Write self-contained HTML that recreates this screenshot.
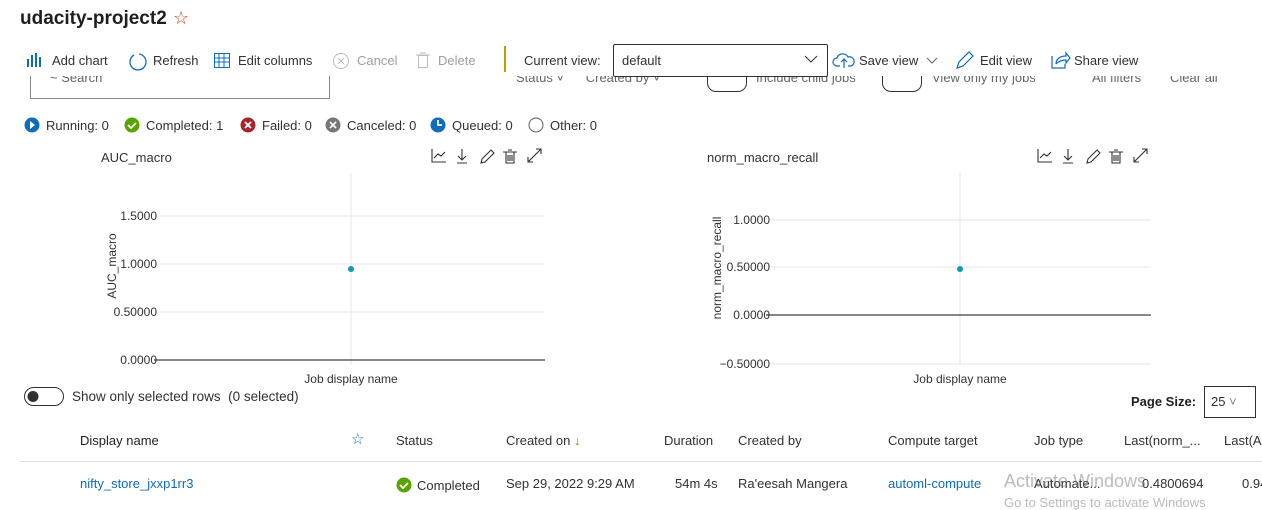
<!DOCTYPE html>
<html><head><meta charset="utf-8"><style>
body{margin:0;width:1262px;height:505px;overflow:hidden;background:#fff;font-family:"Liberation Sans",sans-serif;font-size:13px;color:#323130;position:relative}
.a{position:absolute;white-space:nowrap}
.g{color:#a19f9d}
.b{color:#0f6cbd}
svg{position:absolute;left:0;top:0}
</style></head><body>
<div class="a" style="left:20px;top:8px;font-size:19px;font-weight:bold;color:#201f1e">udacity-project2</div>
<div class="a" style="left:173px;top:8px;font-size:18px;color:#c43e1c">☆</div>

<div class="a" style="left:30px;top:76px;width:298px;height:22px;border:1px solid #8a8886;border-top:none"></div>
<div class="a" style="left:50px;top:70px;font-size:13px;color:#666">~ Search</div>
<div class="a" style="left:516px;top:70px;color:#666">Status ˅ &nbsp;&nbsp;&nbsp;&nbsp; Created by ˅</div>
<div class="a" style="left:707px;top:66px;width:38px;height:24px;border:1px solid #333;border-radius:9px"></div>
<div class="a" style="left:756px;top:70px;color:#666">Include child jobs</div>
<div class="a" style="left:882px;top:66px;width:38px;height:24px;border:1px solid #333;border-radius:9px"></div>
<div class="a" style="left:932px;top:70px;color:#666">View only my jobs</div>
<div class="a" style="left:1092px;top:70px;color:#666">All filters &nbsp;&nbsp;&nbsp;&nbsp;&nbsp;&nbsp; Clear all</div>
<div class="a" style="left:0;top:42px;width:1262px;height:34px;background:#fff"></div>

<div class="a" style="left:52px;top:53px">Add chart</div>
<div class="a" style="left:153px;top:53px">Refresh</div>
<div class="a" style="left:238px;top:53px">Edit columns</div>
<div class="a g" style="left:357px;top:53px">Cancel</div>
<div class="a g" style="left:438px;top:53px">Delete</div>
<div class="a" style="left:504px;top:46px;width:2px;height:26px;background:#c19c00"></div>
<div class="a" style="left:524px;top:53px">Current view:</div>
<div class="a" style="left:613px;top:44px;width:213px;height:31px;border:1px solid #323130;border-radius:2px"></div>
<div class="a" style="left:622px;top:53px">default</div>
<div class="a" style="left:859px;top:53px">Save view</div>
<div class="a" style="left:980px;top:53px">Edit view</div>
<div class="a" style="left:1074px;top:53px">Share view</div>

<div class="a" style="left:46px;top:118px">Running: 0</div>
<div class="a" style="left:146px;top:118px">Completed: 1</div>
<div class="a" style="left:262px;top:118px">Failed: 0</div>
<div class="a" style="left:347px;top:118px">Canceled: 0</div>
<div class="a" style="left:452px;top:118px">Queued: 0</div>
<div class="a" style="left:550px;top:118px">Other: 0</div>

<div class="a" style="left:101px;top:150px">AUC_macro</div>
<div class="a" style="left:707px;top:150px">norm_macro_recall</div>

<div class="a" style="left:72px;top:389px;font-size:13.5px">Show only selected rows &nbsp;(0 selected)</div>
<div class="a" style="left:1131px;top:394px;font-weight:bold;color:#201f1e">Page Size:</div>
<div class="a" style="left:1204px;top:386px;width:50px;height:30px;border:1px solid #323130"></div>
<div class="a" style="left:1211px;top:394px">25 <span style="color:#888">˅</span></div>

<div class="a" style="left:80px;top:433px;color:#201f1e">Display name</div>
<div class="a" style="left:351px;top:430px;color:#0f6cbd;font-size:15px">☆</div>
<div class="a" style="left:396px;top:433px">Status</div>
<div class="a" style="left:506px;top:433px">Created on <span style="color:#c27700">↓</span></div>
<div class="a" style="left:664px;top:433px">Duration</div>
<div class="a" style="left:738px;top:433px">Created by</div>
<div class="a" style="left:888px;top:433px">Compute target</div>
<div class="a" style="left:1034px;top:433px">Job type</div>
<div class="a" style="left:1124px;top:433px">Last(norm_...</div>
<div class="a" style="left:1224px;top:433px">Last(A</div>
<div class="a" style="left:20px;top:461px;width:1242px;height:1px;background:#e1dfdd"></div>

<div class="a b" style="left:80px;top:476px">nifty_store_jxxp1rr3</div>
<div class="a" style="left:417px;top:478px">Completed</div>
<div class="a" style="left:506px;top:476px">Sep 29, 2022 9:29 AM</div>
<div class="a" style="left:675px;top:476px">54m 4s</div>
<div class="a" style="left:738px;top:476px">Ra'eesah Mangera</div>
<div class="a b" style="left:888px;top:476px">automl-compute</div>
<div class="a" style="left:1034px;top:476px">Automate...</div>
<div class="a" style="left:1142px;top:476px">0.4800694</div>
<div class="a" style="left:1242px;top:476px">0.94</div>
<div class="a" style="left:1004px;top:471px;font-size:18px;color:rgba(120,120,120,.5)">Activate Windows</div>
<div class="a" style="left:1004px;top:495px;font-size:13px;color:rgba(120,120,120,.5)">Go to Settings to activate Windows</div>

<svg width="1262" height="505" viewBox="0 0 1262 505" font-family="Liberation Sans,sans-serif" font-size="12">
<g fill="#0f6cbd"><rect x="27" y="59" width="2" height="8"/><rect x="31" y="55" width="2" height="12"/><rect x="35" y="53" width="2" height="14"/><rect x="39" y="57" width="2" height="10"/></g>
<path d="M134 55a8 8 0 1 0 5 -1" fill="none" stroke="#0f6cbd" stroke-width="1.3"/>
<g fill="none" stroke="#0f6cbd"><rect x="214.5" y="53.5" width="15" height="14"/><path d="M214 58h16M214 62h16M219 54v14M224 54v14"/></g>
<circle cx="341" cy="61" r="7.5" fill="none" stroke="#bbb"/><path d="M338 58l6 6M344 58l-6 6" stroke="#bbb"/>
<rect x="418.5" y="55.5" width="9" height="12" fill="none" stroke="#bbb"/><path d="M416 55h14M420 53h6" stroke="#bbb"/>
<path d="M805 56l6 6 6-6" fill="none" stroke="#323130"/>
<path d="M840 66h-3a4 4 0 0 1 0-8a6 6 0 0 1 11-1a4 4 0 0 1 3 9h-3M844 68v-8M841 62l3-3 3 3" fill="none" stroke="#0f6cbd" stroke-width="1.2"/>
<path d="M927 58l5 5 5-5" fill="none" stroke="#666"/>
<path d="M957 68l2-6 10-10 4 4-10 10z" fill="none" stroke="#0f6cbd" stroke-width="1.2"/>
<path d="M1052 56v12h13v-4M1056 64c0-5 4-8 10-8v-3l4 5-4 5v-3c-4 0-7 1-10 4" fill="none" stroke="#0f6cbd" stroke-width="1.2"/>
<circle cx="32" cy="125" r="7.5" fill="#0f6cbd"/><path d="M30 121l5 4-5 4z" fill="#fff"/>
<circle cx="132" cy="125" r="7.5" fill="#57a300"/><path d="M128 125l3 3 5-5" fill="none" stroke="#fff" stroke-width="1.8"/>
<circle cx="248" cy="125" r="7.5" fill="#a4262c"/><path d="M245 122l6 6M251 122l-6 6" stroke="#fff" stroke-width="1.8"/>
<circle cx="333" cy="125" r="7.5" fill="#797775"/><path d="M330 122l6 6M336 122l-6 6" stroke="#fff" stroke-width="1.8"/>
<circle cx="438" cy="125" r="7.5" fill="#0f6cbd"/><path d="M438 120v5h4" fill="none" stroke="#fff" stroke-width="1.8"/>
<circle cx="536" cy="125" r="7" fill="none" stroke="#605e5c"/>
<circle cx="404" cy="485" r="7.5" fill="#57a300"/><path d="M400 485l3 3 5-5" fill="none" stroke="#fff" stroke-width="1.8"/>
<rect x="24.5" y="387.5" width="39" height="18" rx="9" fill="none" stroke="#323130"/><circle cx="33" cy="396.5" r="5.5" fill="#323130"/>
<g fill="none" stroke="#323130" stroke-width="1.1">
<path d="M432 149v13h14M434 158l4-4 3 2 4-4"/><path d="M462 149v11M458 156l4 4 4-4M457 163h10"/><path d="M481 163l1-4 9-9 3 3-9 9z"/><path d="M503 152h14M506 152v11h8v-11M508 150h4M508 155v6M510 155v6M512 155v6"/><path d="M528 162l13-13M528 157v5h5M541 154v-5h-5"/>
<path d="M1038 149v13h14M1040 158l4-4 3 2 4-4"/><path d="M1068 149v11M1064 156l4 4 4-4M1063 163h10"/><path d="M1087 163l1-4 9-9 3 3-9 9z"/><path d="M1109 152h14M1112 152v11h8v-11M1114 150h4M1114 155v6M1116 155v6M1118 155v6"/><path d="M1134 162l13-13M1134 157v5h5M1147 154v-5h-5"/>
</g>
<g stroke="#e6e6e6"><path d="M158 216h387M158 264h387M158 312h387M351 173v192"/></g>
<path d="M154 360h391" stroke="#111"/>
<g fill="#323130" text-anchor="end"><text x="157" y="220">1.5000</text><text x="157" y="268">1.0000</text><text x="157" y="316">0.50000</text><text x="157" y="364">0.0000</text></g>
<text x="0" y="0" transform="translate(116 266) rotate(-90)" text-anchor="middle" fill="#323130">AUC_macro</text>
<text x="351" y="383" text-anchor="middle" fill="#323130">Job display name</text>
<circle cx="351" cy="269" r="3" fill="#0a9ac4"/>
<g stroke="#e6e6e6"><path d="M771 220h380M771 267h380M771 364h380M960 173v192"/></g>
<path d="M766 315h385" stroke="#111"/>
<g fill="#323130" text-anchor="end"><text x="770" y="224">1.0000</text><text x="770" y="271">0.50000</text><text x="770" y="319">0.0000</text><text x="770" y="368">−0.50000</text></g>
<text x="0" y="0" transform="translate(721 268) rotate(-90)" text-anchor="middle" fill="#323130">norm_macro_recall</text>
<text x="960" y="383" text-anchor="middle" fill="#323130">Job display name</text>
<circle cx="960" cy="269" r="3" fill="#0a9ac4"/>
</svg>
</body></html>
